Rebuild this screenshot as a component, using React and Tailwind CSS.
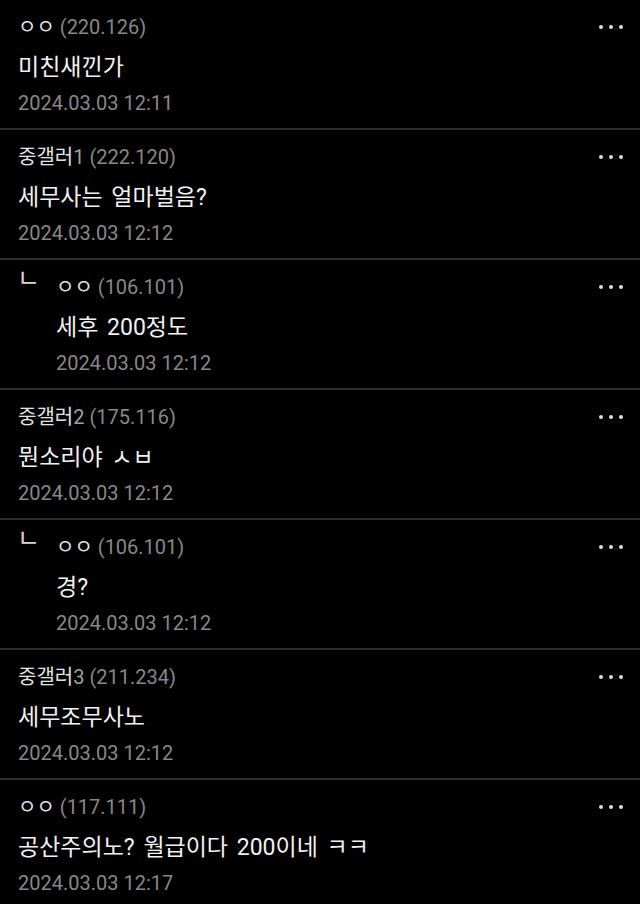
const COMMENTS = [
  { name: 'ㅇㅇ', ip: '220.126', text: '미친새낀가', date: '2024.03.03 12:11' },
  { name: '중갤러', num: '1', ip: '222.120', text: '세무사는 얼마벌음?', date: '2024.03.03 12:12' },
  { name: 'ㅇㅇ', ip: '106.101', text: '세후 200정도', date: '2024.03.03 12:12', reply: true },
  { name: '중갤러', num: '2', ip: '175.116', text: '뭔소리야 ㅅㅂ', date: '2024.03.03 12:12' },
  { name: 'ㅇㅇ', ip: '106.101', text: '경?', date: '2024.03.03 12:12', reply: true },
  { name: '중갤러', num: '3', ip: '211.234', text: '세무조무사노', date: '2024.03.03 12:12' },
  { name: 'ㅇㅇ', ip: '117.111', text: '공산주의노? 월급이다 200이네 ㅋㅋ', date: '2024.03.03 12:17' },
]

function MoreDots() {
  return (
    <div className="flex items-center gap-[6px] pr-[17px]">
      <span className="w-[4px] h-[4px] rounded-full bg-[#e0e0e0]" />
      <span className="w-[4px] h-[4px] rounded-full bg-[#e0e0e0]" />
      <span className="w-[4px] h-[4px] rounded-full bg-[#e0e0e0]" />
    </div>
  )
}

function Comment({ c }) {
  return (
    <div className="h-[130px] border-b-2 border-[#2c2c2c] flex pl-[18px] pt-[13px]">
      {c.reply && (
        <div className="w-[39px] shrink-0 -mt-[5px] text-[25px] leading-[22px] text-[#d8d8d8] -ml-[1px]">ㄴ</div>
      )}
      <div className="flex-1 flex flex-col">
        <div className="flex items-center justify-between h-[28px]">
          <div className="text-[20px] leading-[28px] whitespace-nowrap">
            <span className="text-[#e4e4e4]">{c.name}</span>
            {c.num && <span className="text-[#a0a0a0]">{c.num}</span>}
            <span className="text-[#888888]"> ({c.ip})</span>
          </div>
          <MoreDots />
        </div>
        <div className="mt-[7px] text-[23px] leading-[40px] text-[#f2f2f2] [word-spacing:3px]">{c.text}</div>
        <div className="mt-[1px] text-[20px] leading-[28px] text-[#888888]">{c.date}</div>
      </div>
    </div>
  )
}

export default function App() {
  return (
    <div
      className="w-[640px] h-[904px] bg-black overflow-hidden"
      style={{ fontFamily: 'Roboto, "Noto Sans CJK KR", sans-serif' }}
    >
      {COMMENTS.map((c, i) => (
        <Comment key={i} c={c} />
      ))}
    </div>
  )
}
